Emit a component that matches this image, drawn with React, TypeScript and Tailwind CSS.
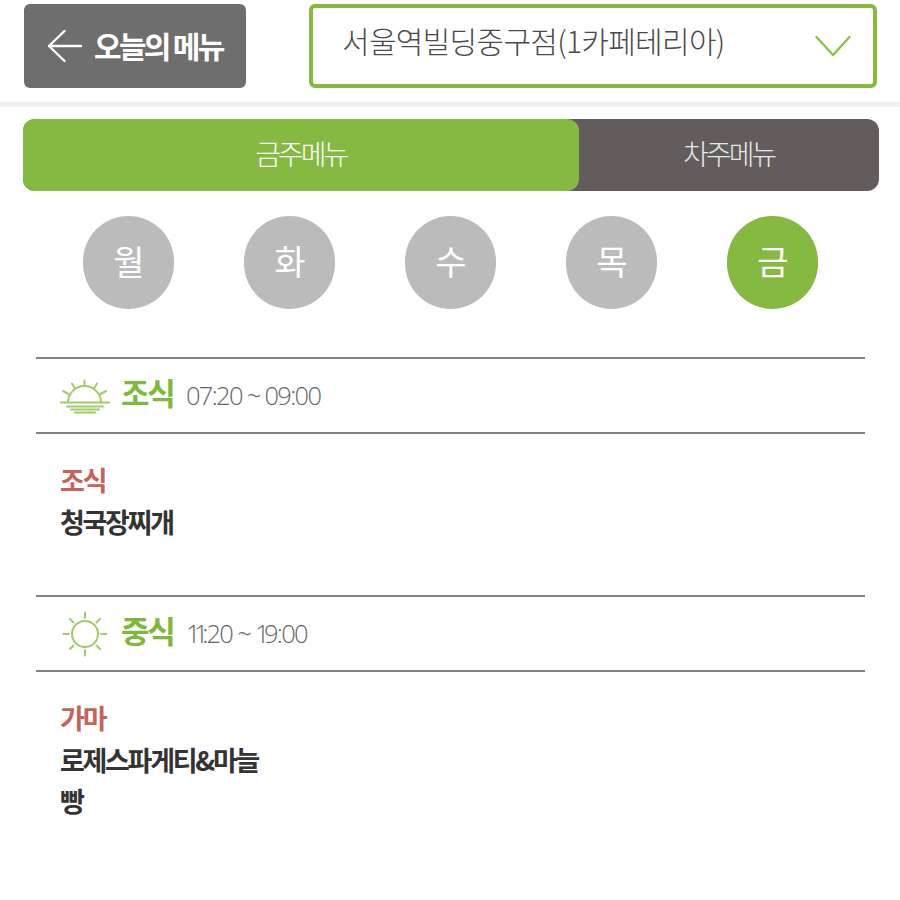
const font = "font-['Noto_Sans_CJK_KR','Noto_Sans',sans-serif]";

function SunriseIcon() {
  return (
    <svg width="50" height="36" viewBox="0 0 50 36" fill="none" stroke="#a0cc6c" strokeWidth="2" strokeLinecap="round" className="shrink-0">
      <path d="M1 23.5H49" />
      <path d="M8 23.5a16.5 16.5 0 0 1 33 0" />
      <path d="M7 27.5H43M11 30.5H39M15 33.5H35" />
      <path d="M24.5 1.5V7M12 4.5L15 9.5M37 4.5L34 9.5M3 12L8.5 15M46 12L40.5 15" />
    </svg>
  );
}

function SunIcon() {
  return (
    <svg width="46" height="46" viewBox="0 0 46 46" fill="none" stroke="#a0cc6c" strokeWidth="2" strokeLinecap="round" className="shrink-0">
      <circle cx="23" cy="23" r="13" />
      <path d="M23 1.5V7M23 39V44.5M1.5 23H7M39 23H44.5M8 8L11.5 11.5M38 8L34.5 11.5M8 38L11.5 34.5M38 38L34.5 34.5" />
    </svg>
  );
}

function Meal({ icon, title, time, corner, items, bodyH, iconBox }: { icon: React.ReactNode; title: string; time: React.ReactNode; corner: string; items: string[]; bodyH: string; iconBox: string }) {
  return (
    <section>
      <div className="h-[77px] border-y-[2.5px] border-[#828282] flex items-center">
        <div className={`w-[74px] shrink-0 flex justify-start ${iconBox}`}>{icon}</div>
        <span className="w-[53px] text-[31px] leading-none font-bold text-[#7fb73f] tracking-[-2.2px] mt-[-8px] ml-[11px] whitespace-nowrap">{title}</span>
        <span className="text-[25.5px] leading-none font-['Open_Sans',sans-serif] font-light text-[#666666] tracking-[-1.7px] ml-[12px] whitespace-nowrap">{time}</span>
      </div>
      <div className={`${bodyH} pl-[24px] pt-[28px]`}>
        <div className="text-[27px] leading-[36px] font-semibold text-[#c5625a] tracking-[-2.1px]">{corner}</div>
        {items.map((t) => (
          <div key={t} className="text-[27px] leading-[41px] mt-[3px] h-[38px] font-semibold text-[#333333] tracking-[-2.3px] first:mt-[8px] whitespace-nowrap">{t}</div>
        ))}
      </div>
    </section>
  );
}

export default function App() {
  return (
    <div className={`w-[900px] h-[900px] bg-white overflow-hidden ${font}`}>
      <header className="h-[107px] border-b-[5px] border-[#f0f0f0] pt-[4px] pl-[24px] pr-[23px] flex items-start justify-between">
        <button className="w-[222px] h-[84px] rounded-[6px] bg-[#6e6e6e] flex items-center pl-[23px] text-white">
          <svg width="36" height="34" viewBox="0 0 36 34" fill="none" stroke="white" strokeWidth="2.4" strokeLinecap="round" strokeLinejoin="round" className="shrink-0">
            <path d="M2 17H34M17.5 2L2 17L17.5 32" />
          </svg>
          <span className="ml-[11px] text-[30px] leading-none font-bold tracking-[-2.7px] whitespace-nowrap mt-[-3px]">오늘의 메뉴</span>
        </button>
        <div className="w-[568px] h-[84px] rounded-[6px] border-[4px] border-[#86b942] bg-white flex items-center justify-between pl-[29px] pr-[22px]">
          <span className="text-[30px] leading-none font-light text-[#4a4a4a] tracking-[-0.7px] whitespace-nowrap mt-[-12px]">서울역빌딩중구점(1카페테리아)</span>
          <svg width="36" height="22" viewBox="0 0 36 22" fill="none" stroke="#8cc04b" strokeWidth="2.4" strokeLinecap="round" strokeLinejoin="round" className="shrink-0">
            <path d="M1.5 2L18 20L34.5 2" />
          </svg>
        </div>
      </header>

      <div className="mt-[12px] ml-[22.5px] h-[72px] w-[856px] rounded-[12px] bg-[#625d5c] flex">
        <div className="w-[556.5px] rounded-[12px] bg-[#86b942] flex items-center justify-center text-white text-[28px] tracking-[-3px] font-light pb-[5px]">금주메뉴</div>
        <div className="flex-1 flex items-center justify-center text-[#e6e6e6] text-[28px] tracking-[-3px] font-light pb-[5px]">차주메뉴</div>
      </div>

      <div className="mt-[25px] pl-[83px] flex gap-[70px]">
        {["월", "화", "수", "목", "금"].map((d) => (
          <div key={d} className={`w-[91px] h-[93px] rounded-full flex items-center justify-center text-white text-[34px] pb-[5px] pl-[1px] ${d === "금" ? "bg-[#86b942]" : "bg-[#bbbbbb]"} font-normal`}>{d}</div>
        ))}
      </div>

      <main className="mt-[48px] mx-[36px] w-[829px]">
        <Meal icon={<SunriseIcon />} iconBox="pl-[24px] mt-[2px]" title="조식" time="07:20 ~ 09:00" corner="조식" items={["청국장찌개"]} bodyH="h-[161px]" />
        <Meal
          icon={<SunIcon />}
          iconBox="pl-[26px]"
          title="중식"
          time={<><span className="tracking-[-6.5px]">11</span>:20 ~ <span className="tracking-[-5.5px]">1</span>9:00</>}
          corner="가마"
          items={["로제스파게티&마늘", "빵"]}
          bodyH="h-[200px]"
        />
      </main>
    </div>
  );
}
